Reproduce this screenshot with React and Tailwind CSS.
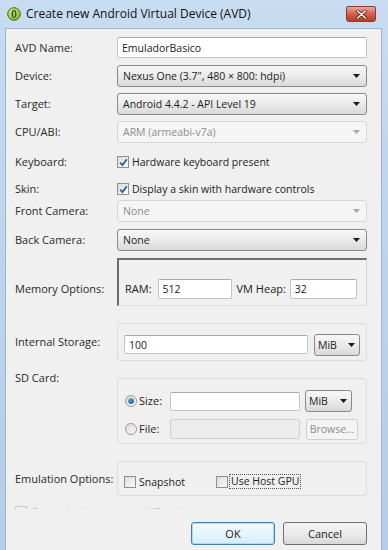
import React from "react";

function Arrow({ disabled }) {
  return (
    <svg width="7" height="4" viewBox="0 0 7 4" className="shrink-0">
      <path d="M0 0H7L3.5 4Z" fill={disabled ? "#a8a8a8" : "#1a1a1a"} />
    </svg>
  );
}

function Combo({ children, disabled, className = "" }) {
  return (
    <div
      className={
        "flex items-center justify-between rounded-[3px] border pl-[5px] pr-[6px] text-[10.5px] " +
        (disabled
          ? "border-[#d6d6d6] bg-[#f5f5f5] text-[#8e8e8e] "
          : "border-[#8a8a8a] bg-linear-to-b from-[#f7f7f7] via-[#ebebeb] to-[#d9d9d9] text-[#1c1c1c] ") +
        className
      }
    >
      <span className="whitespace-nowrap">{children}</span>
      <Arrow disabled={disabled} />
    </div>
  );
}

function Input({ children, disabled, className = "" }) {
  return (
    <div
      className={
        "flex items-center rounded-[2px] border pl-[4px] text-[10.5px] " +
        (disabled
          ? "border-[#cfcfcf] bg-[#ececec] "
          : "border-[#c4c4c4] border-t-[#ababab] bg-white ") +
        className
      }
    >
      {children}
    </div>
  );
}

function Check({ checked }) {
  return (
    <span className="flex h-[12px] w-[12px] shrink-0 items-center justify-center border border-[#8f8f8f] bg-linear-to-br from-[#dcdcdc] to-[#fbfbfb]">
      {checked && (
        <svg width="9" height="9" viewBox="0 0 9 9">
          <path d="M1.2 4.6L3.5 7L7.8 1.3" fill="none" stroke="#2c5aa0" strokeWidth="1.8" />
        </svg>
      )}
    </span>
  );
}

function Radio({ checked }) {
  return (
    <span className="flex h-[12px] w-[12px] shrink-0 items-center justify-center rounded-full border border-[#9a9a9a] bg-linear-to-br from-[#d8d8d8] to-[#fafafa]">
      {checked && <span className="h-[6px] w-[6px] rounded-full bg-linear-to-br from-[#6fb6e8] to-[#1c5a8c]" />}
    </span>
  );
}

function Row({ label, children, className = "" }) {
  return (
    <div className={"flex items-center " + className}>
      <div className="w-[102px] shrink-0 whitespace-nowrap text-[#2a2a2a]">{label}</div>
      <div className="w-[250px]">{children}</div>
    </div>
  );
}

function AppIcon() {
  return (
    <svg width="14" height="14" viewBox="0 0 14 14">
      <defs>
        <radialGradient id="g" cx="40%" cy="35%" r="70%">
          <stop offset="0" stopColor="#e3f58a" />
          <stop offset="1" stopColor="#7fb524" />
        </radialGradient>
      </defs>
      <circle cx="7" cy="7" r="6.3" fill="url(#g)" stroke="#3f6a14" strokeWidth="1" />
      <rect x="4.6" y="3" width="4.8" height="8" rx="2.4" fill="#2f5a10" />
      <path d="M7 4.2V9.8" stroke="#f4ffd8" strokeWidth="1.2" />
    </svg>
  );
}

export default function App() {
  return (
    <div className="flex h-[550px] w-[388px] flex-col overflow-hidden bg-linear-to-b from-[#c8dcf2] via-[#bcd3ec] to-[#b5cde8] font-['Open_Sans',sans-serif] text-[11px] leading-[14px]">
      {/* Title bar */}
      <div className="flex h-[28px] shrink-0 items-center justify-between pl-[7px] pr-[12px]">
        <div className="flex items-center gap-[5px]">
          <AppIcon />
          <span className="text-[12px] text-[#111]">Create new Android Virtual Device (AVD)</span>
        </div>
        <div className="flex h-[16px] w-[30px] items-center justify-center rounded-b-[3px] rounded-t-[2px] border border-[#8a3a2e] bg-linear-to-b from-[#e9a99c] via-[#d0604c] to-[#c0391f]">
          <svg width="11" height="9" viewBox="0 0 11 9">
            <path d="M1.5 1L9.5 8M9.5 1L1.5 8" stroke="#5a1a10" strokeWidth="3" strokeLinecap="round" />
            <path d="M1.5 1L9.5 8M9.5 1L1.5 8" stroke="#ffffff" strokeWidth="1.6" strokeLinecap="round" />
          </svg>
        </div>
      </div>

      {/* Body */}
      <div className="ml-[5px] mr-[6px] flex-1 border-l border-r border-t border-[#9db4cf] bg-[#f0f0f0] pl-[9px]">
        <Row label="AVD Name:" className="mt-[8px]">
          <Input className="h-[21px] text-[#1c1c1c]">EmuladorBasico</Input>
        </Row>
        <Row label="Device:" className="mt-[7px]">
          <Combo className="h-[22px]">Nexus One (3.7", 480 × 800: hdpi)</Combo>
        </Row>
        <Row label="Target:" className="mt-[6px]">
          <Combo className="h-[22px]">Android 4.4.2 - API Level 19</Combo>
        </Row>
        <Row label="CPU/ABI:" className="mt-[6px]">
          <Combo disabled className="h-[22px]">ARM (armeabi-v7a)</Combo>
        </Row>
        <Row label="Keyboard:" className="mt-[10px] h-[18px]">
          <div className="flex items-center gap-[3px] text-[10.5px] text-[#1c1c1c]">
            <Check checked />
            <span>Hardware keyboard present</span>
          </div>
        </Row>
        <Row label="Skin:" className="mt-[9px] h-[18px]">
          <div className="flex items-center gap-[3px] text-[10.5px] text-[#1c1c1c]">
            <Check checked />
            <span>Display a skin with hardware controls</span>
          </div>
        </Row>
        <Row label="Front Camera:" className="mt-[2px]">
          <Combo disabled className="h-[22px]">None</Combo>
        </Row>
        <Row label="Back Camera:" className="mt-[7px]">
          <Combo className="h-[22px]">None</Combo>
        </Row>

        {/* Memory */}
        <div className="mt-[7px] flex items-start">
          <div className="mt-[24px] w-[102px] shrink-0 text-[#2a2a2a]">Memory Options:</div>
          <div className="flex h-[48px] w-[250px] items-start border-b border-l-2 border-r border-t-2 border-b-[#dedede] border-l-[#6a6a6a] border-r-[#d4d4d4] border-t-[#707070] pl-[6px] pt-[19px]">
            <span className="mt-[3px] text-[#1c1c1c]">RAM:</span>
            <Input className="ml-[6px] h-[20px] w-[74px] text-[#1c1c1c]">512</Input>
            <span className="ml-[5px] mt-[3px] text-[#1c1c1c]">VM Heap:</span>
            <Input className="ml-[4px] h-[20px] w-[67px] text-[#1c1c1c]">32</Input>
          </div>
        </div>

        {/* Internal storage */}
        <div className="mt-[17px] flex items-center">
          <div className="w-[102px] shrink-0 text-[#2a2a2a]">Internal Storage:</div>
          <div className="flex h-[38px] w-[250px] items-center rounded-[3px] border border-[#dcdcdc] pl-[6px] pt-[5px]">
            <Input className="h-[19px] w-[184px] text-[#1c1c1c]">100</Input>
            <Combo className="ml-[6px] h-[22px] w-[46px] !pl-[3px] !pr-[4px]">MiB</Combo>
          </div>
        </div>

        {/* SD card */}
        <div className="mt-[17px] flex items-start">
          <div className="-mt-[7px] w-[102px] shrink-0 text-[#2a2a2a]">SD Card:</div>
          <div className="flex h-[66px] w-[250px] flex-col gap-[6px] rounded-[3px] border border-[#dcdcdc] pl-[7px] pt-[11px]">
            <div className="flex h-[22px] items-center">
              <Radio checked />
              <span className="ml-[2px] w-[31px] text-[#1c1c1c]">Size:</span>
              <Input className="h-[19px] w-[130px]" />
              <Combo className="ml-[5px] h-[22px] w-[47px] !pl-[3px] !pr-[4px]">MiB</Combo>
            </div>
            <div className="flex h-[22px] items-center">
              <Radio />
              <span className="ml-[2px] w-[31px] text-[#1c1c1c]">File:</span>
              <Input disabled className="h-[20px] w-[130px]" />
              <div className="ml-[6px] flex h-[21px] w-[52px] items-center justify-center rounded-[2px] border border-[#d0d0d0] bg-[#f4f4f4] text-[10.5px] text-[#8c8c8c]">
                Browse...
              </div>
            </div>
          </div>
        </div>

        {/* Emulation */}
        <div className="mt-[17px] flex items-center">
          <div className="w-[102px] shrink-0 text-[#2a2a2a]">Emulation Options:</div>
          <div className="flex h-[35px] w-[250px] items-center rounded-[3px] border border-[#dcdcdc] pl-[6px] pt-[6px] text-[10.5px]">
            <Check />
            <span className="ml-[3px] w-[77px] text-[#1c1c1c]">Snapshot</span>
            <Check />
            <span className="ml-[1px] border border-dotted border-[#555] px-[1px] leading-[13px] text-[#1c1c1c]">Use Host GPU</span>
          </div>
        </div>

        {/* Clipped faded row */}
        <div className="mt-[10px] h-[3px] overflow-hidden opacity-30">
          <div className="flex items-start gap-[4px]">
            <span className="h-[12px] w-[12px] border border-[#777]" />
            <span className="-mt-[1px] text-[#444]">Override the existing AVD with the same name</span>
          </div>
        </div>

        {/* Buttons */}
        <div className="mt-[13px] flex justify-end gap-[8px] pr-[14px]">
          <div className="flex h-[23px] w-[84px] items-center justify-center rounded-[3px] border border-[#3c7fb1] bg-linear-to-b from-[#f2fbff] via-[#e6f4fc] to-[#d6ecf9] text-[#1c1c1c] shadow-[inset_0_0_0_1px_#a6e0f8]">
            OK
          </div>
          <div className="flex h-[23px] w-[84px] items-center justify-center rounded-[3px] border border-[#707070] bg-linear-to-b from-[#f4f4f4] via-[#ebebeb] to-[#d8d8d8] text-[#1c1c1c]">
            Cancel
          </div>
        </div>
      </div>
    </div>
  );
}
